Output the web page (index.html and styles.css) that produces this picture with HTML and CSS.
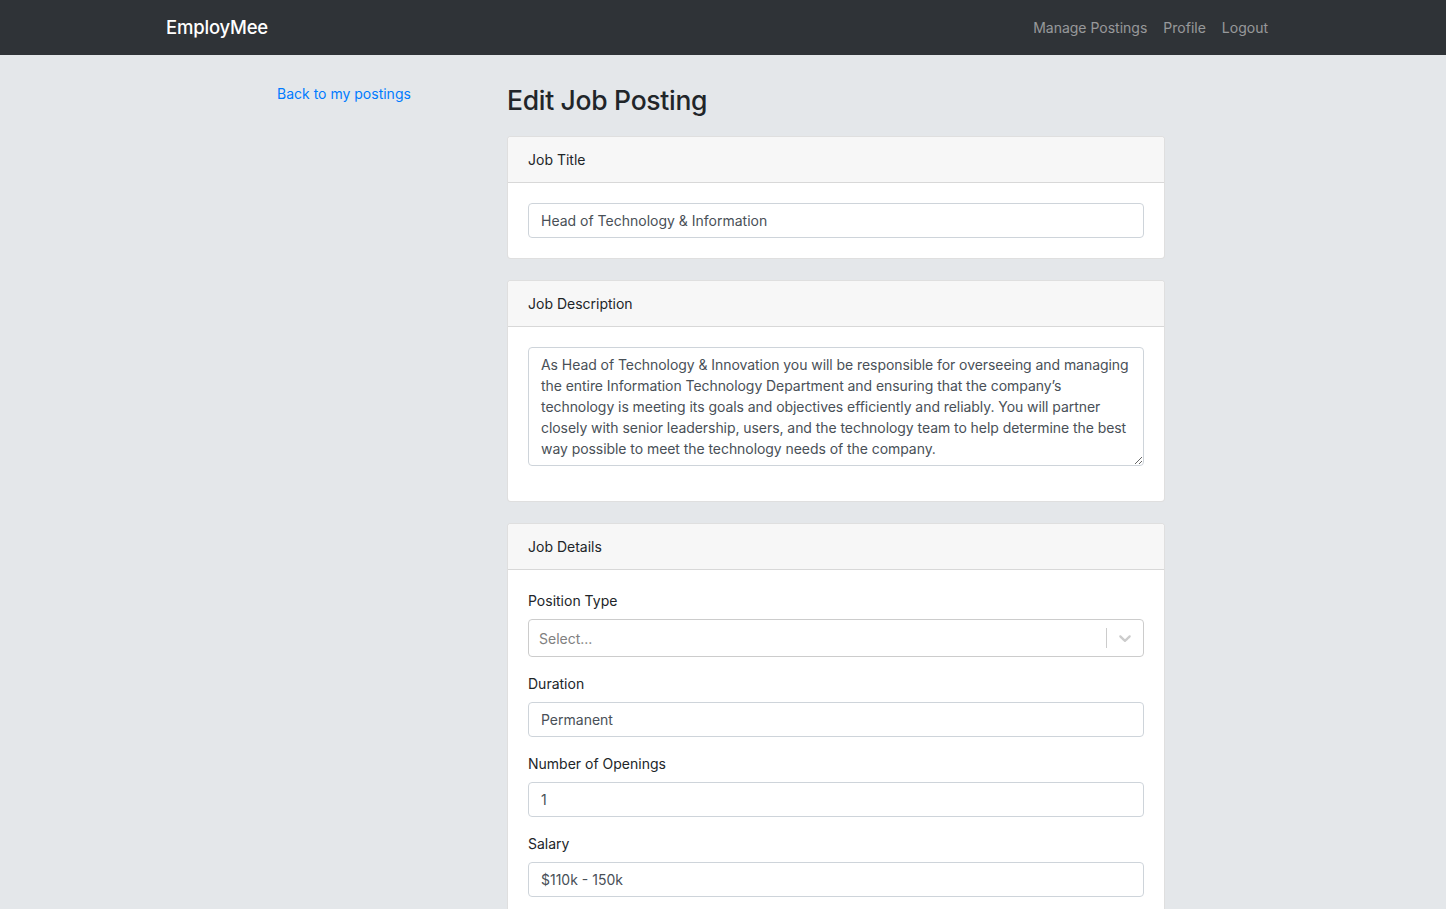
FILE: index.html
```html
<!DOCTYPE html>
<html lang="en">
<head>
<meta charset="utf-8">
<title>EmployMee - Edit Job Posting</title>
<link rel="stylesheet" href="styles.css">
</head>
<body>
<nav class="navbar">
  <div class="navbar-inner">
    <a class="brand" href="#">EmployMee</a>
    <div class="nav-links">
      <a class="nav-link" href="#">Manage Postings</a>
      <a class="nav-link" href="#">Profile</a>
      <a class="nav-link" href="#">Logout</a>
    </div>
  </div>
</nav>
<main class="page">
  <aside class="sidebar">
    <a class="back-link" href="#">Back to my postings</a>
  </aside>
  <section class="content">
    <h3 class="page-title">Edit Job Posting</h3>

    <div class="card">
      <div class="card-header">Job Title</div>
      <div class="card-body">
        <input class="form-control" type="text" value="Head of Technology &amp; Information">
      </div>
    </div>

    <div class="card">
      <div class="card-header">Job Description</div>
      <div class="card-body">
        <div class="form-group form-group-desc">
          <textarea class="form-control textarea" rows="5">As Head of Technology &amp; Innovation you will be responsible for overseeing and managing the entire Information Technology Department and ensuring that the company’s technology is meeting its goals and objectives efficiently and reliably. You will partner closely with senior leadership, users, and the technology team to help determine the best way possible to meet the technology needs of the company.</textarea>
        </div>
      </div>
    </div>

    <div class="card">
      <div class="card-header">Job Details</div>
      <div class="card-body">
        <div class="form-group">
          <label class="label">Position Type</label>
          <div class="select">
            <span class="select-placeholder">Select...</span>
            <span class="select-sep"></span>
            <span class="select-arrow">
              <svg width="20" height="20" viewBox="0 0 20 20"><path fill="#cccccc" d="M4.516 7.548c0.436-0.446 1.043-0.481 1.576 0l3.908 3.747 3.908-3.747c0.533-0.481 1.141-0.446 1.574 0 0.436 0.445 0.408 1.197 0 1.615-0.406 0.418-4.695 4.502-4.695 4.502-0.217 0.223-0.502 0.335-0.787 0.335s-0.57-0.112-0.789-0.335c0 0-4.287-4.084-4.695-4.502s-0.436-1.170 0-1.615z"/></svg>
            </span>
          </div>
        </div>
        <div class="form-group">
          <label class="label">Duration</label>
          <input class="form-control" type="text" value="Permanent">
        </div>
        <div class="form-group">
          <label class="label">Number of Openings</label>
          <input class="form-control" type="text" value="1">
        </div>
        <div class="form-group">
          <label class="label">Salary</label>
          <input class="form-control" type="text" value="$110k - 150k">
        </div>
      </div>
    </div>
  </section>
</main>
</body>
</html>
```

FILE: styles.css
```css
* { box-sizing: border-box; }

html, body {
  margin: 0;
  padding: 0;
}

body {
  font-family: Inter, "Noto Sans", "Liberation Sans", sans-serif;
  font-size: 14px;
  line-height: 1.5;
  color: #212529;
  background: #e4e7ea;
}

a { text-decoration: none; }

.navbar {
  background: #2f3337;
  height: 55px;
}

.navbar-inner {
  width: 1140px;
  margin: 0 auto;
  padding: 0 17px 0 13px;
  height: 100%;
  display: flex;
  align-items: center;
  justify-content: space-between;
}

.brand {
  color: #fff;
  font-size: 18.5px;
  font-weight: 500;
  letter-spacing: -0.2px;
}

.nav-links {
  display: flex;
  align-items: center;
}

.nav-link {
  color: rgba(255, 255, 255, 0.5);
  font-size: 14px;
  padding: 8px;
}

.page {
  width: 892px;
  margin: 0 auto;
  padding: 28px 4px 0 0;
  display: grid;
  grid-template-columns: 230px 658px;
}

.back-link {
  color: #007bff;
  font-size: 14px;
  display: inline-block;
  line-height: 21px;
}

.page-title {
  margin: 0 0 19px;
  font-size: 26.5px;
  font-weight: 500;
  line-height: 34px;
  letter-spacing: -0.3px;
}

.card {
  background: #fff;
  border: 1px solid rgba(0, 0, 0, 0.125);
  border-radius: 4px;
  margin-bottom: 21px;
  overflow: hidden;
}

.card-header {
  background: #f7f7f7;
  border-bottom: 1px solid rgba(0, 0, 0, 0.125);
  padding: 12px 20px;
  line-height: 21px;
}

.card-body {
  padding: 20px;
}

.form-group {
  margin-bottom: 16px;
}

.form-group-desc {
  margin-bottom: 15px;
}

.label {
  display: block;
  line-height: 21px;
  margin-bottom: 8px;
}

.form-control {
  display: block;
  width: 100%;
  height: 35px;
  padding: 6px 12px;
  font-family: inherit;
  font-size: 14px;
  line-height: 21px;
  color: #495057;
  background: #fff;
  border: 1px solid #ced4da;
  border-radius: 4px;
  margin: 0;
}

.textarea {
  height: 119px;
  padding: 6px 10px 6px 12px;
  letter-spacing: -0.06px;
  resize: vertical;
}

.select {
  display: flex;
  align-items: center;
  height: 38px;
  border: 1px solid #cccccc;
  border-radius: 4px;
  background: #fff;
}

.select-placeholder {
  flex: 1;
  padding-left: 10px;
  color: #808080;
}

.select-sep {
  width: 1px;
  height: 20px;
  background: #cccccc;
}

.select-arrow {
  display: flex;
  padding: 8px;
}
```
